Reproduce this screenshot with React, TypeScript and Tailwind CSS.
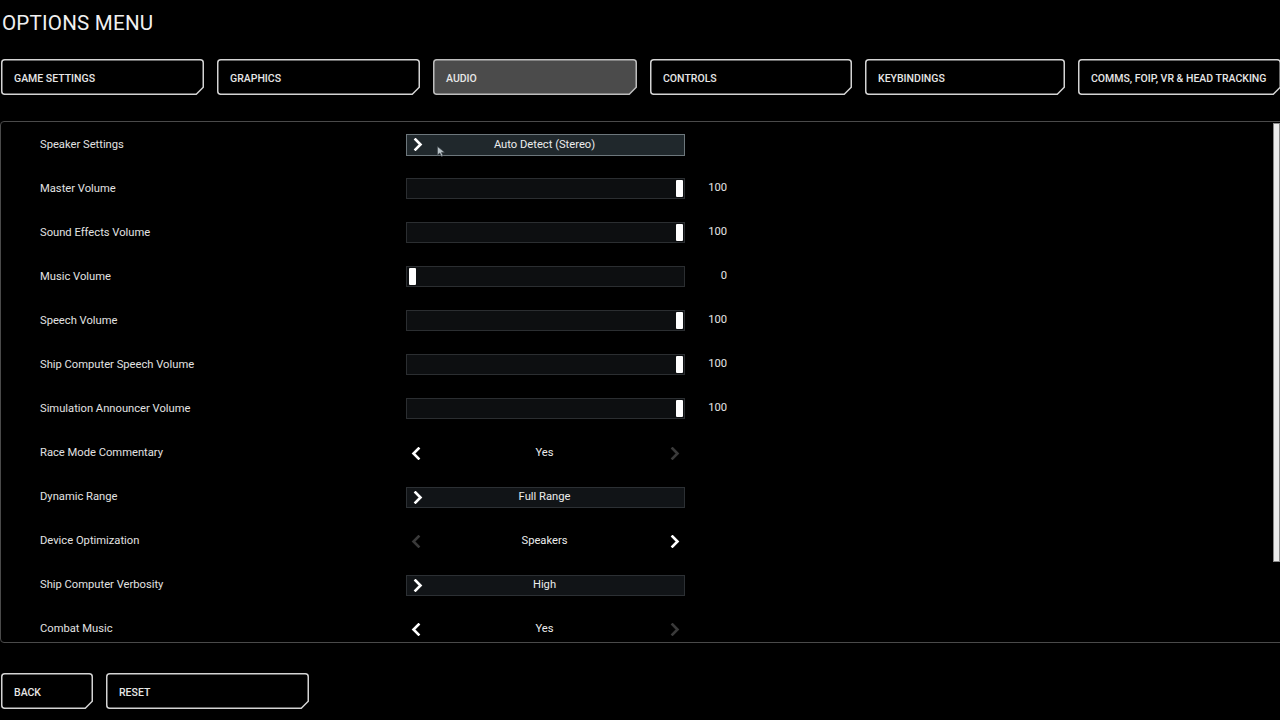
import React from "react";

const FONT = { fontFamily: "Roboto, 'Liberation Sans', sans-serif" };

function Frame({ w, h, active, children }: { w: number; h: number; active?: boolean; children: React.ReactNode }) {
  const r = 3;
  const c = 7;
  const d = `M0.75 ${r + 0.75} Q0.75 0.75 ${r + 0.75} 0.75 H${w - r - 0.75} Q${w - 0.75} 0.75 ${w - 0.75} ${r + 0.75} V${h - c - 0.75} L${w - c - 0.75} ${h - 0.75} H${r + 0.75} Q0.75 ${h - 0.75} 0.75 ${h - r - 0.75} Z`;
  return (
    <div className="relative shrink-0 flex items-center" style={{ width: w, height: h }}>
      <svg className="absolute inset-0" width={w} height={h}>
        <path d={d} fill={active ? "#4b4b4b" : "#000"} stroke={active ? "#bdbdbd" : "#d4d4d4"} strokeWidth={1.5} />
      </svg>
      <span className="relative pl-[13px] pt-[3px] text-[10.5px] font-medium text-[#e6e6e6] whitespace-nowrap">
        {children}
      </span>
    </div>
  );
}

function Chevron({ dir, dim }: { dir: "left" | "right"; dim?: boolean }) {
  return (
    <svg width="10" height="13" viewBox="0 0 10 13">
      <path
        d={dir === "right" ? "M2.5 1.5 L7.5 6.5 L2.5 11.5" : "M7.5 1.5 L2.5 6.5 L7.5 11.5"}
        fill="none"
        stroke={dim ? "#3a3a3a" : "#ffffff"}
        strokeWidth={2.6}
        strokeLinecap="square"
      />
    </svg>
  );
}

type Row =
  | { label: string; kind: "slider"; value: number }
  | { label: string; kind: "drop"; text: string; hi?: boolean }
  | { label: string; kind: "arrows"; text: string; left: boolean; right: boolean };

const rows: Row[] = [
  { label: "Speaker Settings", kind: "drop", text: "Auto Detect (Stereo)", hi: true },
  { label: "Master Volume", kind: "slider", value: 100 },
  { label: "Sound Effects Volume", kind: "slider", value: 100 },
  { label: "Music Volume", kind: "slider", value: 0 },
  { label: "Speech Volume", kind: "slider", value: 100 },
  { label: "Ship Computer Speech Volume", kind: "slider", value: 100 },
  { label: "Simulation Announcer Volume", kind: "slider", value: 100 },
  { label: "Race Mode Commentary", kind: "arrows", text: "Yes", left: true, right: false },
  { label: "Dynamic Range", kind: "drop", text: "Full Range" },
  { label: "Device Optimization", kind: "arrows", text: "Speakers", left: false, right: true },
  { label: "Ship Computer Verbosity", kind: "drop", text: "High" },
  { label: "Combat Music", kind: "arrows", text: "Yes", left: true, right: false },
];

function Control({ row }: { row: Row }) {
  if (row.kind === "slider") {
    return (
      <div className="flex items-center">
        <div className="relative w-[279px] h-[21px] bg-[#0d0f11] border border-[#2b2e31]">
          <div
            className="absolute top-[1px] w-[7px] h-[17px] bg-white rounded-[1px]"
            style={{ left: row.value === 0 ? 2 : 269 }}
          />
        </div>
        <div className="w-[42px] text-right text-[11.2px] text-[#e6e6e6] pt-[1px]">{row.value}</div>
      </div>
    );
  }
  if (row.kind === "drop") {
    return (
      <div
        className={
          "flex items-center w-[279px] border " +
          (row.hi ? "h-[22px] mt-[1px] bg-[#20282c] border-[#6d777c]" : "h-[21px] mt-[2px] bg-[#111417] border-[#2c3034]")
        }
      >
        <div className="pl-[6px] w-[20px] flex items-center">
          <Chevron dir="right" />
        </div>
        <div className="flex-1 text-center pr-[22px] pt-[1px] text-[11.2px] text-[#ececec]">{row.text}</div>
      </div>
    );
  }
  return (
    <div className="flex items-center justify-between w-[279px] h-[21px] px-[5px] mt-[2px]">
      <Chevron dir="left" dim={!row.left} />
      <div className="text-[11.2px] text-[#ececec] pt-[1px] pr-[2px]">{row.text}</div>
      <Chevron dir="right" dim={!row.right} />
    </div>
  );
}

export default function App() {
  const tabs = ["GAME SETTINGS", "GRAPHICS", "AUDIO", "CONTROLS", "KEYBINDINGS", "COMMS, FOIP, VR & HEAD TRACKING"];
  const widths = [203, 203, 204, 202, 200, 203];
  return (
    <div className="relative w-[1280px] h-[720px] bg-black overflow-hidden text-white" style={FONT}>
      <div className="h-[59px] pl-[2px] pt-[9px]">
        <div className="text-[20.6px] leading-[28px] text-[#f0f0f0] tracking-[0.2px]">OPTIONS MENU</div>
      </div>
      <div className="flex gap-[13px] pl-[1px]">
        {tabs.map((t, i) => (
          <Frame key={t} w={widths[i]} h={36} active={t === "AUDIO"}>
            {t}
          </Frame>
        ))}
      </div>
      <div className="relative mt-[26px] w-[1290px] h-[522px] border border-[#4a4a4a] rounded-[4px] overflow-hidden">
        {rows.map((r) => (
          <div key={r.label} className="flex items-center h-[44px]">
            <div className="w-[405px] pl-[39px] pt-[2px] text-[11.2px] text-[#e2e2e2]">{r.label}</div>
            <Control row={r} />
          </div>
        ))}
        <div className="absolute left-[1272px] top-[1px] w-[7px] h-[439px] bg-[#ececec] border border-[#8a8a8a]" />
        <svg className="absolute left-[436px] top-[24px]" width="8" height="11" viewBox="0 0 8 11">
          <path d="M0.5 0.5 L0.5 9 L2.8 7 L4.5 10.5 L6 9.8 L4.4 6.4 L7.5 6.2 Z" fill="#b9c3c8" stroke="#3a4246" strokeWidth="0.6" />
        </svg>
      </div>
      <div className="flex gap-[13px] pl-[1px] mt-[30px]">
        <Frame w={92} h={36}>BACK</Frame>
        <Frame w={203} h={36}>RESET</Frame>
      </div>
    </div>
  );
}
